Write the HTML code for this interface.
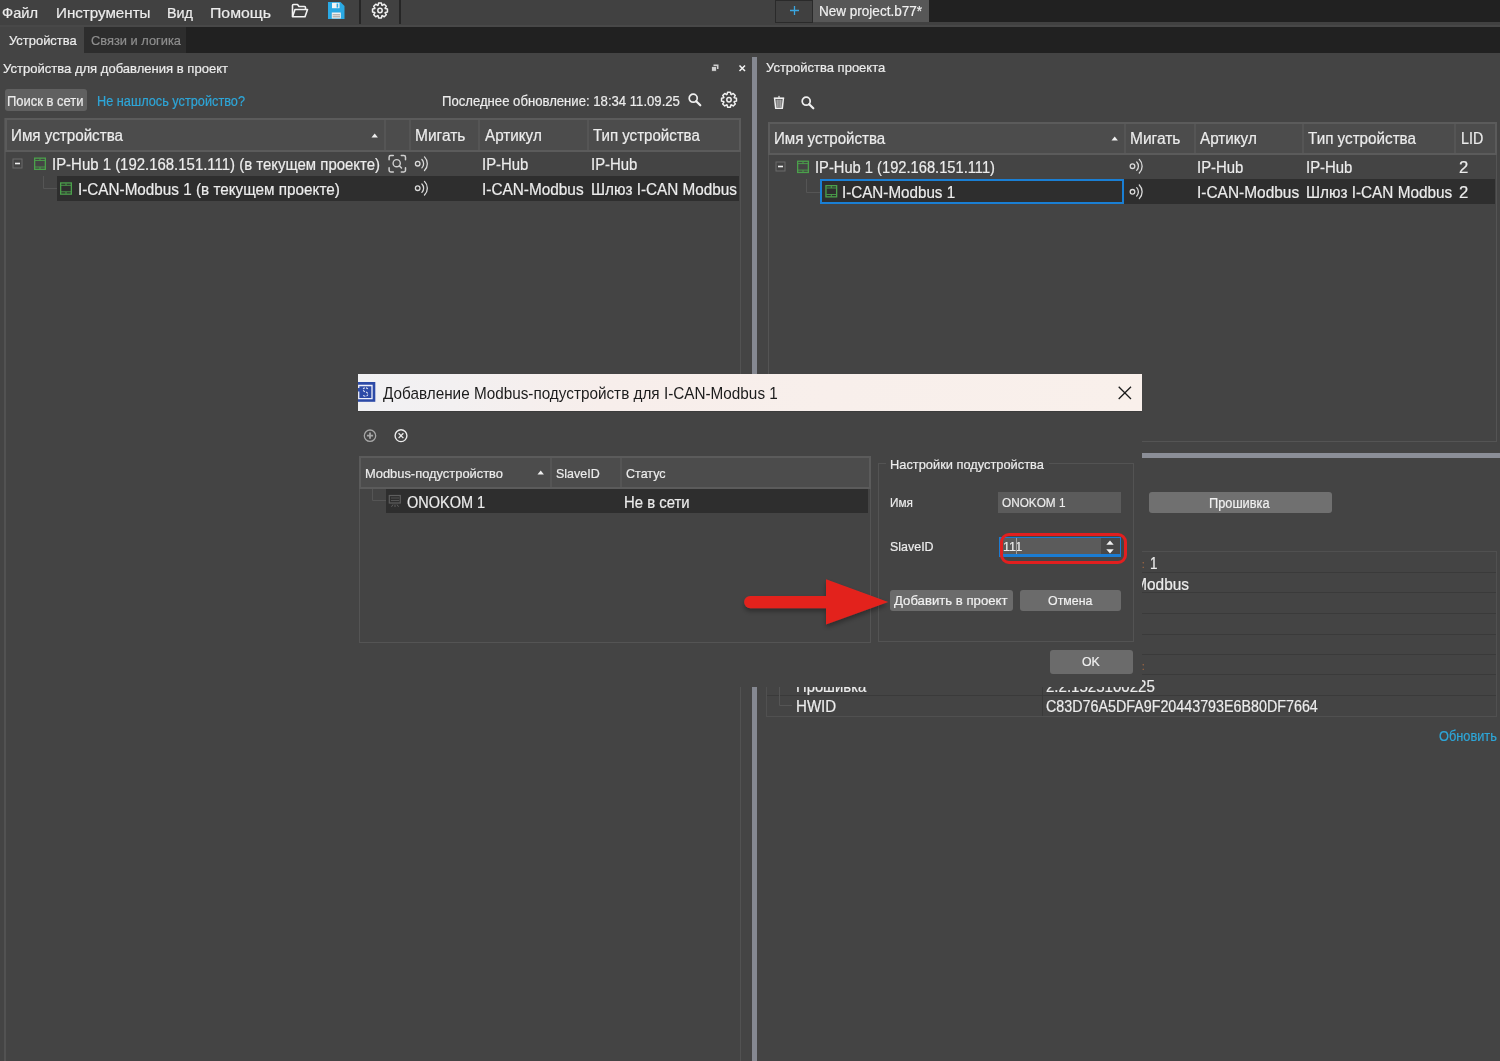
<!DOCTYPE html><html><head><meta charset="utf-8"><style>
html,body{margin:0;padding:0;}
body{width:1500px;height:1061px;overflow:hidden;position:relative;background:#444444;font-family:"Liberation Sans",sans-serif;}
.t{position:absolute;white-space:nowrap;line-height:1;transform-origin:0 0;-webkit-text-stroke:0.2px currentColor;}
.r{position:absolute;}
svg{position:absolute;overflow:visible;}
</style></head><body>
<div class="r" style="left:0px;top:0px;width:1500px;height:27px;background:#414141;"></div>
<div class="r" style="left:0px;top:24.5px;width:1500px;height:2.5px;background:#484848;"></div>
<div class="r" style="left:929px;top:0px;width:571px;height:22px;background:#212121;"></div>
<div class="t" style="left:2px;top:4.80px;font-size:15px;color:#ececec;transform:scaleX(0.9759);">Файл</div>
<div class="t" style="left:55.5px;top:4.80px;font-size:15px;color:#ececec;transform:scaleX(1.0104);">Инструменты</div>
<div class="t" style="left:167px;top:4.80px;font-size:15px;color:#ececec;transform:scaleX(0.9580);">Вид</div>
<div class="t" style="left:210px;top:4.80px;font-size:15px;color:#ececec;transform:scaleX(1.0529);">Помощь</div>
<div class="r" style="left:359px;top:0px;width:2px;height:24px;background:#262626;"></div>
<div class="r" style="left:399px;top:0px;width:2px;height:24px;background:#262626;"></div>
<svg style="left:291px;top:3px;" width="18" height="16" viewBox="0 0 18 16"><path d="M1.5,13.5 L1.5,2.5 Q1.5,1.5 2.5,1.5 L6.5,1.5 L8,3.5 L13.5,3.5 Q14.5,3.5 14.5,4.5 L14.5,6" fill="none" stroke="#f2f2f2" stroke-width="1.6" stroke-linejoin="round"/><path d="M1.5,13.8 L4,6.5 L16.5,6.5 L14,13.8 Z" fill="none" stroke="#f2f2f2" stroke-width="1.6" stroke-linejoin="round"/></svg>
<svg style="left:328px;top:2px;" width="17" height="18" viewBox="0 0 17 18"><path d="M0,0 L12.5,0 L16.5,4 L16.5,17 L0,17 Z" fill="#2aa9e4"/><rect x="4" y="0.8" width="7.5" height="5.4" fill="#f4f4f4"/><rect x="8.6" y="1.6" width="1.6" height="4" fill="#2aa9e4"/><rect x="3.8" y="10.5" width="9" height="6" fill="#f0f0f0"/><rect x="4.6" y="12.3" width="7.4" height="1" fill="#9a9a9a"/><rect x="4.6" y="14.3" width="7.4" height="1" fill="#9a9a9a"/></svg>
<svg style="left:0px;top:0px;" width="1" height="1" viewBox="0 0 1 1"></svg>
<svg style="left:0;top:0" width="1500" height="1061"><path d="M385.27,8.60 L387.46,9.06 L387.46,11.94 L385.27,12.40 L385.07,12.88 L386.29,14.76 L384.26,16.79 L382.38,15.57 L381.90,15.77 L381.44,17.96 L378.56,17.96 L378.10,15.77 L377.62,15.57 L375.74,16.79 L373.71,14.76 L374.93,12.88 L374.73,12.40 L372.54,11.94 L372.54,9.06 L374.73,8.60 L374.93,8.12 L373.71,6.24 L375.74,4.21 L377.62,5.43 L378.10,5.23 L378.56,3.04 L381.44,3.04 L381.90,5.23 L382.38,5.43 L384.26,4.21 L386.29,6.24 L385.07,8.12 Z" fill="none" stroke="#f0f0f0" stroke-width="1.5" stroke-linejoin="round"/><circle cx="380" cy="10.5" r="2.2" fill="none" stroke="#f0f0f0" stroke-width="1.5"/><path d="M734.27,97.80 L736.46,98.26 L736.46,101.14 L734.27,101.60 L734.07,102.08 L735.29,103.96 L733.26,105.99 L731.38,104.77 L730.90,104.97 L730.44,107.16 L727.56,107.16 L727.10,104.97 L726.62,104.77 L724.74,105.99 L722.71,103.96 L723.93,102.08 L723.73,101.60 L721.54,101.14 L721.54,98.26 L723.73,97.80 L723.93,97.32 L722.71,95.44 L724.74,93.41 L726.62,94.63 L727.10,94.43 L727.56,92.24 L730.44,92.24 L730.90,94.43 L731.38,94.63 L733.26,93.41 L735.29,95.44 L734.07,97.32 Z" fill="none" stroke="#f0f0f0" stroke-width="1.5" stroke-linejoin="round"/><circle cx="729" cy="99.7" r="2.2" fill="none" stroke="#f0f0f0" stroke-width="1.5"/></svg>
<div class="r" style="left:775px;top:0px;width:38px;height:23px;background:#404040;border:1px solid #2a2a2a;box-sizing:border-box;"></div>
<svg style="left:790px;top:5.5px;" width="9" height="9" viewBox="0 0 9 9"><path d="M4.5,0 V9 M0,4.5 H9" stroke="#3aa6e0" stroke-width="1.3"/></svg>
<div class="r" style="left:813px;top:0px;width:116px;height:22px;background:#575757;"></div>
<div class="t" style="left:819px;top:4.82px;font-size:13.8px;color:#f0f0f0;transform:scaleX(0.9802);">New project.b77*</div>
<div class="r" style="left:0px;top:27px;width:1500px;height:26px;background:#212121;"></div>
<div class="r" style="left:0px;top:27px;width:84px;height:26px;background:#444444;"></div>
<div class="t" style="left:9.3px;top:35.03px;font-size:12.6px;color:#ececec;transform:scaleX(1.0275);">Устройства</div>
<div class="r" style="left:84px;top:27px;width:102px;height:26px;background:#2d2d2d;"></div>
<div class="t" style="left:91px;top:35.03px;font-size:12.6px;color:#8e8e8e;transform:scaleX(1.0202);">Связи и логика</div>
<div class="t" style="left:3px;top:63.36px;font-size:12.8px;color:#ececec;transform:scaleX(1.0195);">Устройства для добавления в проект</div>
<svg style="left:711px;top:64px;" width="8" height="8" viewBox="0 0 8 8"><rect x="2.5" y="0.5" width="5" height="4.5" fill="#cfcfcf"/><rect x="0.5" y="2.5" width="5" height="4.8" fill="#cfcfcf" stroke="#444" stroke-width="0.8"/></svg>
<svg style="left:739px;top:64.5px;" width="7" height="7" viewBox="0 0 7 7"><path d="M0.5,0.5 L6,6 M6,0.5 L0.5,6" stroke="#f4f4f4" stroke-width="1.5"/></svg>
<div class="r" style="left:4.5px;top:89px;width:82.0px;height:22px;background:#606060;border-radius:3px;"></div>
<div class="t" style="left:7px;top:93.65px;font-size:14px;color:#ececec;transform:scaleX(0.9264);">Поиск в сети</div>
<div class="t" style="left:97px;top:93.65px;font-size:14px;color:#2ea6d8;transform:scaleX(0.9094);">Не нашлось устройство?</div>
<div class="t" style="left:441.7px;top:93.75px;font-size:14px;color:#ececec;transform:scaleX(0.9375);">Последнее обновление: 18:34 11.09.25</div>
<svg style="left:688px;top:93px;" width="14" height="14" viewBox="0 0 14 14"><circle cx="5.2" cy="5.2" r="4" fill="none" stroke="#f0f0f0" stroke-width="1.7"/><path d="M8.2,8.2 L12.3,12.3" stroke="#f0f0f0" stroke-width="2.2" stroke-linecap="round"/></svg>
<div class="r" style="left:4px;top:118px;width:737px;height:957px;border:1px solid #525252;box-sizing:border-box;border-left-width:2px;"></div>
<div class="r" style="left:5px;top:118px;width:736px;height:34px;background:#4c4c4c;border:2px solid #5b5b5b;box-sizing:border-box;"></div>
<div class="r" style="left:384px;top:120px;width:2px;height:30px;background:#555555;"></div>
<div class="r" style="left:409px;top:120px;width:2px;height:30px;background:#555555;"></div>
<div class="r" style="left:478px;top:120px;width:2px;height:30px;background:#555555;"></div>
<div class="r" style="left:587px;top:120px;width:2px;height:30px;background:#555555;"></div>
<svg style="left:371px;top:132.5px;" width="8" height="5" viewBox="0 0 8 5"><path d="M0.5,4.5 L3.7,0.5 L6.9,4.5 Z" fill="#f0f0f0"/></svg>
<div class="t" style="left:11px;top:127.96px;font-size:16px;color:#ececec;transform:scaleX(0.9488);">Имя устройства</div>
<div class="t" style="left:415.2px;top:127.96px;font-size:16px;color:#ececec;transform:scaleX(0.9698);">Мигать</div>
<div class="t" style="left:484.8px;top:127.96px;font-size:16px;color:#ececec;transform:scaleX(0.9521);">Артикул</div>
<div class="t" style="left:593.2px;top:127.96px;font-size:16px;color:#ececec;transform:scaleX(0.9406);">Тип устройства</div>
<div class="t" style="left:52px;top:156.96px;font-size:16px;color:#ececec;transform:scaleX(0.9340);">IP-Hub 1 (192.168.151.111) (в текущем проекте)</div>
<div class="t" style="left:482.4px;top:156.96px;font-size:16px;color:#ececec;transform:scaleX(0.9318);">IP-Hub</div>
<div class="t" style="left:591.2px;top:156.96px;font-size:16px;color:#ececec;transform:scaleX(0.9318);">IP-Hub</div>
<div class="r" style="left:57px;top:176px;width:682px;height:24.5px;background:#2e2e2e;"></div>
<div class="t" style="left:77.5px;top:181.96px;font-size:16px;color:#ececec;transform:scaleX(0.9543);">I-CAN-Modbus 1 (в текущем проекте)</div>
<div class="t" style="left:482.4px;top:181.96px;font-size:16px;color:#ececec;transform:scaleX(0.9602);">I-CAN-Modbus</div>
<div class="t" style="left:591.2px;top:181.96px;font-size:16px;color:#ececec;transform:scaleX(0.9561);">Шлюз I-CAN Modbus</div>
<svg style="left:0;top:0" width="1500" height="1061"><rect x="13.0" y="159.0" width="9" height="9" fill="none" stroke="#6a6a6a" stroke-width="1"/><path d="M15.0,163.5 H20.0" stroke="#f0f0f0" stroke-width="1.6"/><rect x="34.65" y="158.15" width="10.7" height="11.2" fill="none" stroke="#4ba04b" stroke-width="1.3"/><path d="M35,160.5 H45 M35,167.0 H45" stroke="#4ba04b" stroke-width="0.9"/><path d="M40.0,158.5 V160.5 M40.0,167.0 V169.0" stroke="#4ba04b" stroke-width="1"/><path d="M43.5,176 V188.5 H57" fill="none" stroke="#555555" stroke-width="1"/><rect x="60.65" y="182.95000000000002" width="10.7" height="11.2" fill="none" stroke="#4ba04b" stroke-width="1.3"/><path d="M61,185.3 H71 M61,191.8 H71" stroke="#4ba04b" stroke-width="0.9"/><path d="M66.0,183.3 V185.3 M66.0,191.8 V193.8" stroke="#4ba04b" stroke-width="1"/><path d="M389.1,159.8 V157.3 Q389.1,155.60000000000002 390.8,155.60000000000002 H393.3 M401.3,155.60000000000002 H403.8 Q405.5,155.60000000000002 405.5,157.3 V159.8 M405.5,167.8 V170.3 Q405.5,172.0 403.8,172.0 H401.3 M393.3,172.0 H390.8 Q389.1,172.0 389.1,170.3 V167.8" fill="none" stroke="#cfcfcf" stroke-width="1.5" stroke-linecap="round"/><circle cx="396.7" cy="163.20000000000002" r="3.6" fill="none" stroke="#cfcfcf" stroke-width="1.4"/><path d="M399.3,165.8 L401.5,168.0" stroke="#cfcfcf" stroke-width="1.5" stroke-linecap="round"/><circle cx="417.7" cy="163.7" r="2.3" fill="none" stroke="#dadada" stroke-width="1.3"/><path d="M421.9,159.5 A6,6 0 0 1 421.9,167.89999999999998" fill="none" stroke="#dadada" stroke-width="1.3" stroke-linecap="round"/><path d="M424.5,156.89999999999998 A9.6,9.6 0 0 1 424.5,170.5" fill="none" stroke="#dadada" stroke-width="1.3" stroke-linecap="round"/><circle cx="417.7" cy="188.2" r="2.3" fill="none" stroke="#dadada" stroke-width="1.3"/><path d="M421.9,184.0 A6,6 0 0 1 421.9,192.39999999999998" fill="none" stroke="#dadada" stroke-width="1.3" stroke-linecap="round"/><path d="M424.5,181.39999999999998 A9.6,9.6 0 0 1 424.5,195.0" fill="none" stroke="#dadada" stroke-width="1.3" stroke-linecap="round"/></svg>
<div class="r" style="left:752px;top:57px;width:5px;height:1004px;background:#858891;"></div>
<div class="t" style="left:765.6px;top:61.56px;font-size:12.8px;color:#ececec;transform:scaleX(1.0157);">Устройства проекта</div>
<svg style="left:773px;top:95px;" width="13" height="15" viewBox="0 0 13 15"><path d="M0.8,3.2 H11.2" stroke="#f0f0f0" stroke-width="1.6"/><path d="M4.8,2.6 L6,0.6 L7.2,2.6 Z" fill="#f0f0f0"/><path d="M1.7,4 L2.7,13.3 H9.3 L10.3,4" fill="none" stroke="#f0f0f0" stroke-width="1.5" stroke-linejoin="round"/><path d="M4.1,4.5 V12 M6,4.5 V12 M7.9,4.5 V12" stroke="#f0f0f0" stroke-width="0.9"/></svg>
<svg style="left:801px;top:96px;" width="14" height="14" viewBox="0 0 14 14"><circle cx="5.2" cy="5.2" r="4" fill="none" stroke="#f0f0f0" stroke-width="1.7"/><path d="M8.2,8.2 L12.3,12.3" stroke="#f0f0f0" stroke-width="2.2" stroke-linecap="round"/></svg>
<div class="r" style="left:768px;top:122px;width:729px;height:320px;border:1px solid #545454;box-sizing:border-box;"></div>
<div class="r" style="left:768px;top:122px;width:729px;height:33px;background:#4c4c4c;border:2px solid #5b5b5b;box-sizing:border-box;"></div>
<div class="r" style="left:1124px;top:124px;width:2px;height:29px;background:#555555;"></div>
<div class="r" style="left:1194px;top:124px;width:2px;height:29px;background:#555555;"></div>
<div class="r" style="left:1302px;top:124px;width:2px;height:29px;background:#555555;"></div>
<div class="r" style="left:1454px;top:124px;width:2px;height:29px;background:#555555;"></div>
<svg style="left:1111px;top:136px;" width="8" height="5" viewBox="0 0 8 5"><path d="M0.5,4.5 L3.7,0.5 L6.9,4.5 Z" fill="#f0f0f0"/></svg>
<div class="t" style="left:774.4px;top:130.96px;font-size:16px;color:#ececec;transform:scaleX(0.9420);">Имя устройства</div>
<div class="t" style="left:1130px;top:130.96px;font-size:16px;color:#ececec;transform:scaleX(0.9698);">Мигать</div>
<div class="t" style="left:1200px;top:130.96px;font-size:16px;color:#ececec;transform:scaleX(0.9521);">Артикул</div>
<div class="t" style="left:1308px;top:130.96px;font-size:16px;color:#ececec;transform:scaleX(0.9511);">Тип устройства</div>
<div class="t" style="left:1460.5px;top:130.96px;font-size:16px;color:#ececec;transform:scaleX(0.8913);">LID</div>
<div class="t" style="left:815.2px;top:159.96px;font-size:16px;color:#ececec;transform:scaleX(0.9184);">IP-Hub 1 (192.168.151.111)</div>
<div class="t" style="left:1197.3px;top:159.96px;font-size:16px;color:#ececec;transform:scaleX(0.9318);">IP-Hub</div>
<div class="t" style="left:1305.9px;top:159.96px;font-size:16px;color:#ececec;transform:scaleX(0.9318);">IP-Hub</div>
<div class="t" style="left:1458.7px;top:159.96px;font-size:16px;color:#ececec;transform:scaleX(1.0442);">2</div>
<div class="r" style="left:820px;top:179px;width:675px;height:24.5px;background:#2e2e2e;"></div>
<div class="r" style="left:820px;top:179px;width:304px;height:24.5px;border:2px solid #1a7fd4;box-sizing:border-box;"></div>
<div class="t" style="left:842.4px;top:184.96px;font-size:16px;color:#ececec;transform:scaleX(0.9492);">I-CAN-Modbus 1</div>
<div class="t" style="left:1197.3px;top:184.96px;font-size:16px;color:#ececec;transform:scaleX(0.9659);">I-CAN-Modbus</div>
<div class="t" style="left:1305.9px;top:184.96px;font-size:16px;color:#ececec;transform:scaleX(0.9568);">Шлюз I-CAN Modbus</div>
<div class="t" style="left:1458.7px;top:184.96px;font-size:16px;color:#ececec;transform:scaleX(1.0442);">2</div>
<svg style="left:0;top:0" width="1500" height="1061"><rect x="776.0" y="162.0" width="9" height="9" fill="none" stroke="#6a6a6a" stroke-width="1"/><path d="M778.0,166.5 H783.0" stroke="#f0f0f0" stroke-width="1.6"/><rect x="797.65" y="161.25" width="10.7" height="11.2" fill="none" stroke="#4ba04b" stroke-width="1.3"/><path d="M798,163.6 H808 M798,170.1 H808" stroke="#4ba04b" stroke-width="0.9"/><path d="M803.0,161.6 V163.6 M803.0,170.1 V172.1" stroke="#4ba04b" stroke-width="1"/><path d="M806.5,179 V192.5 H820" fill="none" stroke="#555555" stroke-width="1"/><rect x="825.9499999999999" y="185.65" width="10.7" height="11.2" fill="none" stroke="#4ba04b" stroke-width="1.3"/><path d="M826.3,188 H836.3 M826.3,194.5 H836.3" stroke="#4ba04b" stroke-width="0.9"/><path d="M831.3,186 V188 M831.3,194.5 V196.5" stroke="#4ba04b" stroke-width="1"/><circle cx="1132.5" cy="166.2" r="2.3" fill="none" stroke="#dadada" stroke-width="1.3"/><path d="M1136.7,162.0 A6,6 0 0 1 1136.7,170.39999999999998" fill="none" stroke="#dadada" stroke-width="1.3" stroke-linecap="round"/><path d="M1139.3,159.39999999999998 A9.6,9.6 0 0 1 1139.3,173.0" fill="none" stroke="#dadada" stroke-width="1.3" stroke-linecap="round"/><circle cx="1132.5" cy="191.8" r="2.3" fill="none" stroke="#dadada" stroke-width="1.3"/><path d="M1136.7,187.60000000000002 A6,6 0 0 1 1136.7,196.0" fill="none" stroke="#dadada" stroke-width="1.3" stroke-linecap="round"/><path d="M1139.3,185.0 A9.6,9.6 0 0 1 1139.3,198.60000000000002" fill="none" stroke="#dadada" stroke-width="1.3" stroke-linecap="round"/></svg>
<div class="r" style="left:757px;top:453px;width:743px;height:4.5px;background:#8b8e97;"></div>
<div class="r" style="left:1148.5px;top:492px;width:183.5px;height:21px;background:#707070;border-radius:3px;"></div>
<div class="t" style="left:1209.4px;top:495.95px;font-size:14px;color:#f0f0f0;transform:scaleX(0.9119);">Прошивка</div>
<div class="r" style="left:766px;top:551px;width:731px;height:166px;border:1px solid #505050;box-sizing:border-box;"></div>
<div class="r" style="left:767px;top:572px;width:729px;height:1px;background:#3a3a3a;"></div>
<div class="r" style="left:767px;top:592px;width:729px;height:1px;background:#3a3a3a;"></div>
<div class="r" style="left:767px;top:613px;width:729px;height:1px;background:#3a3a3a;"></div>
<div class="r" style="left:767px;top:634px;width:729px;height:1px;background:#3a3a3a;"></div>
<div class="r" style="left:767px;top:654px;width:729px;height:1px;background:#3a3a3a;"></div>
<div class="r" style="left:767px;top:674px;width:729px;height:1px;background:#3a3a3a;"></div>
<div class="r" style="left:767px;top:695px;width:729px;height:1px;background:#3a3a3a;"></div>
<div class="r" style="left:1042px;top:552px;width:1px;height:164px;background:#3a3a3a;"></div>
<div class="t" style="left:1149.5px;top:555.96px;font-size:16px;color:#ececec;transform:scaleX(0.8421);">1</div>
<div class="t" style="left:1142px;top:558.69px;font-size:11px;color:#a86a44;transform:scaleX(0.8163);">:</div>
<div class="t" style="left:1142px;top:660.69px;font-size:11px;color:#a86a44;transform:scaleX(0.8163);">:</div>
<div class="t" style="left:1042px;top:576.96px;font-size:16px;color:#ececec;transform:scaleX(0.9627);">Шлюз I-CAN Modbus</div>
<div class="t" style="left:795.8px;top:678.96px;font-size:16px;color:#ececec;transform:scaleX(0.9258);">Прошивка</div>
<div class="t" style="left:1046.2px;top:678.96px;font-size:16px;color:#ececec;transform:scaleX(0.9406);">2.2.1525100225</div>
<div class="t" style="left:795.8px;top:698.96px;font-size:16px;color:#ececec;transform:scaleX(0.9424);">HWID</div>
<div class="t" style="left:1046.2px;top:698.96px;font-size:16px;color:#ececec;transform:scaleX(0.8934);">C83D76A5DFA9F20443793E6B80DF7664</div>
<svg style="left:0;top:0" width="1500" height="1061"><path d="M779.5,676 V705.5 H792" fill="none" stroke="#555555" stroke-width="1"/></svg>
<div class="t" style="left:1439px;top:728.65px;font-size:14px;color:#2ea6d8;transform:scaleX(0.9118);">Обновить</div>
<div class="r" style="left:358px;top:374px;width:784px;height:313px;background:#444444;"></div>
<div class="r" style="left:358px;top:411px;width:784px;height:1px;background:#3c3c3c;"></div>
<div class="r" style="left:358px;top:374px;width:784px;height:37px;background:linear-gradient(90deg,#f1f1f3 0%,#f3f0f1 12%,#f7eeeb 31%,#f8efeb 60%,#f9f0eb 100%);"></div>
<svg style="left:358px;top:382px;" width="18" height="20" viewBox="0 0 18 20"><rect x="0" y="0" width="17.3" height="19.8" fill="#2c4aa7"/><path d="M0.7,6 V3.5 H14 V16.6 H0.7 V9.5" fill="none" stroke="#eef0fa" stroke-width="1.3"/><path d="M9.8,7 Q9,5.8 7.3,5.8 Q5.2,6 5.2,7.8 Q5.4,9.4 7.4,9.9 Q9.8,10.5 9.8,12.3 Q9.6,14.2 7.3,14.2 Q5.8,14.2 5,13.2" fill="none" stroke="#dfe4f4" stroke-width="1.1" stroke-dasharray="2.2 1"/></svg>
<div class="t" style="left:382.5px;top:384.77px;font-size:17.4px;color:#1c1c1c;transform:scaleX(0.8795);-webkit-text-stroke:0;">Добавление Modbus-подустройств для I-CAN-Modbus 1</div>
<svg style="left:1118px;top:385.5px;" width="14" height="14" viewBox="0 0 14 14"><path d="M0.7,0.7 L13,13 M13,0.7 L0.7,13" stroke="#1c1c1c" stroke-width="1.3"/></svg>
<svg style="left:363px;top:429px;" width="14" height="14" viewBox="0 0 14 14"><circle cx="7" cy="6.7" r="5.7" fill="none" stroke="#a6a6a6" stroke-width="1.3"/><path d="M7,3.6 V9.8 M3.9,6.7 H10.1" stroke="#a6a6a6" stroke-width="1.8"/></svg>
<svg style="left:394px;top:429px;" width="14" height="14" viewBox="0 0 14 14"><circle cx="7" cy="6.7" r="5.9" fill="none" stroke="#ececec" stroke-width="1.4"/><path d="M4.6,4.3 L9.4,9.1 M9.4,4.3 L4.6,9.1" stroke="#ececec" stroke-width="1.3"/></svg>
<div class="r" style="left:359px;top:456px;width:512px;height:187px;border:1px solid #545454;box-sizing:border-box;"></div>
<div class="r" style="left:359px;top:456px;width:512px;height:33px;background:#4c4c4c;border:2px solid #5b5b5b;box-sizing:border-box;"></div>
<div class="r" style="left:550px;top:458px;width:2px;height:29px;background:#555555;"></div>
<div class="r" style="left:620px;top:458px;width:2px;height:29px;background:#555555;"></div>
<svg style="left:537px;top:470px;" width="8" height="5" viewBox="0 0 8 5"><path d="M0.5,4.5 L3.7,0.5 L6.9,4.5 Z" fill="#f0f0f0"/></svg>
<div class="t" style="left:365px;top:466.53px;font-size:13.2px;color:#ececec;transform:scaleX(0.9777);">Modbus-подустройство</div>
<div class="t" style="left:556.3px;top:466.53px;font-size:13.2px;color:#ececec;transform:scaleX(0.9461);">SlaveID</div>
<div class="t" style="left:626.2px;top:466.53px;font-size:13.2px;color:#ececec;transform:scaleX(0.9499);">Статус</div>
<div class="r" style="left:386px;top:489px;width:482px;height:24px;background:#2e2e2e;"></div>
<svg style="left:0;top:0" width="1500" height="1061"><path d="M372.5,489 V500.5 H386" fill="none" stroke="#555555" stroke-width="1"/><rect x="389.3" y="495.5" width="11" height="7.5" fill="none" stroke="#5e5e5e" stroke-width="1.2"/><path d="M391,498 H399 M391,500.5 H399" stroke="#5e5e5e" stroke-width="0.8"/><path d="M391.5,506.8 L393,504.5 M395,507 V504.5 M398.5,506.8 L397,504.5" stroke="#5e5e5e" stroke-width="1"/></svg>
<div class="t" style="left:407.2px;top:494.96px;font-size:16px;color:#ececec;transform:scaleX(0.9057);">ONOKOM 1</div>
<div class="t" style="left:624.4px;top:494.96px;font-size:16px;color:#ececec;transform:scaleX(0.9307);">Не в сети</div>
<div class="r" style="left:878px;top:463px;width:256px;height:179px;border:1px solid #535353;box-sizing:border-box;"></div>
<div class="r" style="left:886px;top:455px;width:163px;height:15px;background:#444444;"></div>
<div class="t" style="left:890.3px;top:457.56px;font-size:13.4px;color:#ececec;transform:scaleX(0.9583);">Настройки подустройства</div>
<div class="t" style="left:890.3px;top:496.26px;font-size:13.4px;color:#ececec;transform:scaleX(0.8776);">Имя</div>
<div class="r" style="left:998px;top:492px;width:123px;height:21px;background:#5b5b5b;"></div>
<div class="t" style="left:1001.8px;top:496.26px;font-size:13.4px;color:#ececec;transform:scaleX(0.8798);">ONOKOM 1</div>
<div class="t" style="left:890.3px;top:540.36px;font-size:13.4px;color:#ececec;transform:scaleX(0.9298);">SlaveID</div>
<div class="r" style="left:998.5px;top:536.5px;width:122.5px;height:20.5px;background:#5b5b5b;border:1.5px solid #1b7cd2;box-sizing:border-box;border-bottom-width:3px;border-left-width:2px;"></div>
<div class="r" style="left:1101px;top:538px;width:18.5px;height:16px;background:#484848;"></div>
<svg style="left:1106px;top:540px;" width="10" height="14" viewBox="0 0 10 14"><path d="M0.3,4.8 L4,0.6 L7.7,4.8 Z M0.3,9.2 L4,13.4 L7.7,9.2 Z" fill="#f0f0f0"/></svg>
<div class="t" style="left:1002.8px;top:540.36px;font-size:13.4px;color:#ececec;transform:scaleX(0.9431);">111</div>
<div class="r" style="left:1016px;top:538px;width:1px;height:16px;background:#a0a0a0;"></div>
<div class="r" style="left:1000px;top:532.5px;width:126.5px;height:31.5px;border:3.8px solid #e21f1f;box-sizing:border-box;border-radius:9px;"></div>
<div class="r" style="left:890px;top:590px;width:122.79999999999995px;height:20.700000000000045px;background:#6b6b6b;border-radius:3px;"></div>
<div class="t" style="left:894.3px;top:594.16px;font-size:13.4px;color:#f0f0f0;transform:scaleX(0.9829);">Добавить в проект</div>
<div class="r" style="left:1020px;top:590px;width:101px;height:20.700000000000045px;background:#6b6b6b;border-radius:3px;"></div>
<div class="t" style="left:1047.7px;top:594.16px;font-size:13.4px;color:#f0f0f0;transform:scaleX(0.9241);">Отмена</div>
<div class="r" style="left:1049.6px;top:650px;width:83.60000000000014px;height:24px;background:#6b6b6b;border-radius:3px;"></div>
<div class="t" style="left:1082.4px;top:655.36px;font-size:13.4px;color:#f0f0f0;transform:scaleX(0.9195);">OK</div>
<svg style="left:0;top:0" width="1500" height="1061"><defs><filter id="sh" x="-20%" y="-20%" width="140%" height="160%"><feGaussianBlur in="SourceAlpha" stdDeviation="2.5"/><feOffset dy="3"/><feComponentTransfer><feFuncA type="linear" slope="0.35"/></feComponentTransfer><feMerge><feMergeNode/><feMergeNode in="SourceGraphic"/></feMerge></filter></defs><path filter="url(#sh)" d="M750.2,596 L826,596 L826,579.3 L888.2,602 L826,624.6 L826,608.2 L750.2,608.2 A6.1,6.1 0 0 1 750.2,596 Z" fill="#e3231f"/></svg>
</body></html>
